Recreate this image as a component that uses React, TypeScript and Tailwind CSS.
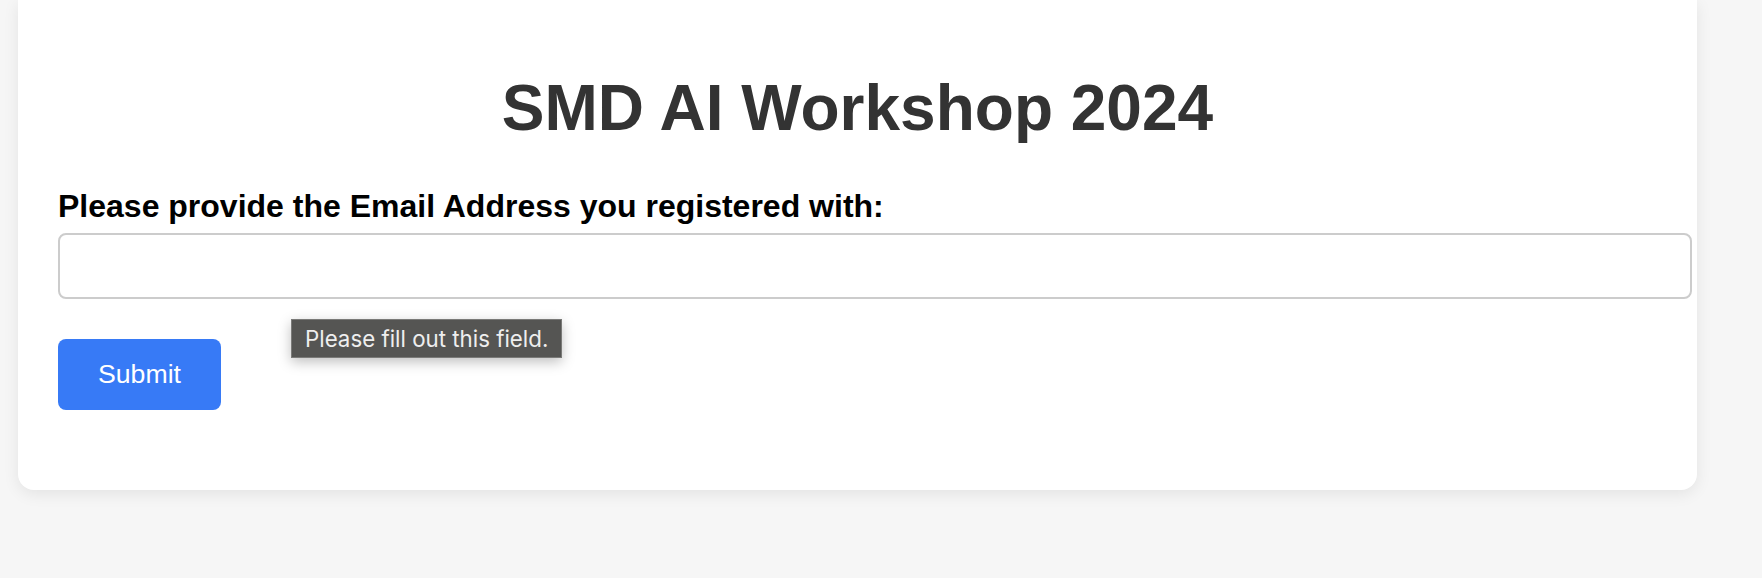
import React from "react";

export default function App() {
  return (
    <div className="relative w-[1762px] h-[578px] overflow-hidden bg-[#f6f6f6]" style={{ fontFamily: '"Liberation Sans", Arial, sans-serif' }}>
      <div className="ml-[18px] w-[1679px] bg-white rounded-b-[16px] shadow-[0_4px_16px_rgba(0,0,0,0.08)] px-[40px] pt-[71px] pb-[80px]">
        <h1 className="text-center text-[64px] leading-[74px] font-bold text-[#333333]">SMD AI Workshop 2024</h1>
        <label className="block mt-[43px] text-[32px] leading-[37px] font-bold text-black">
          Please provide the Email Address you registered with:
        </label>
        <input
          type="email"
          className="block mt-[8px] w-[1634px] h-[66px] border-2 border-[#cccccc] rounded-[8px] bg-white outline-none"
        />
        <button className="block mt-[40px] w-[163px] h-[71px] rounded-[8px] bg-[#377af6] text-white text-[26.67px] leading-[31px]">
          Submit
        </button>
      </div>
      <div
        className="absolute left-[291px] top-[319px] w-[271px] h-[39px] bg-[#555553] border border-[#7a7a78] shadow-[0_4px_12px_rgba(0,0,0,0.25)] flex items-center pl-[13px] text-[#eeeeee] text-[22.3px]"
        style={{ fontFamily: 'Inter, "Noto Sans", sans-serif' }}
      >
        Please fill out this field.
      </div>
    </div>
  );
}
